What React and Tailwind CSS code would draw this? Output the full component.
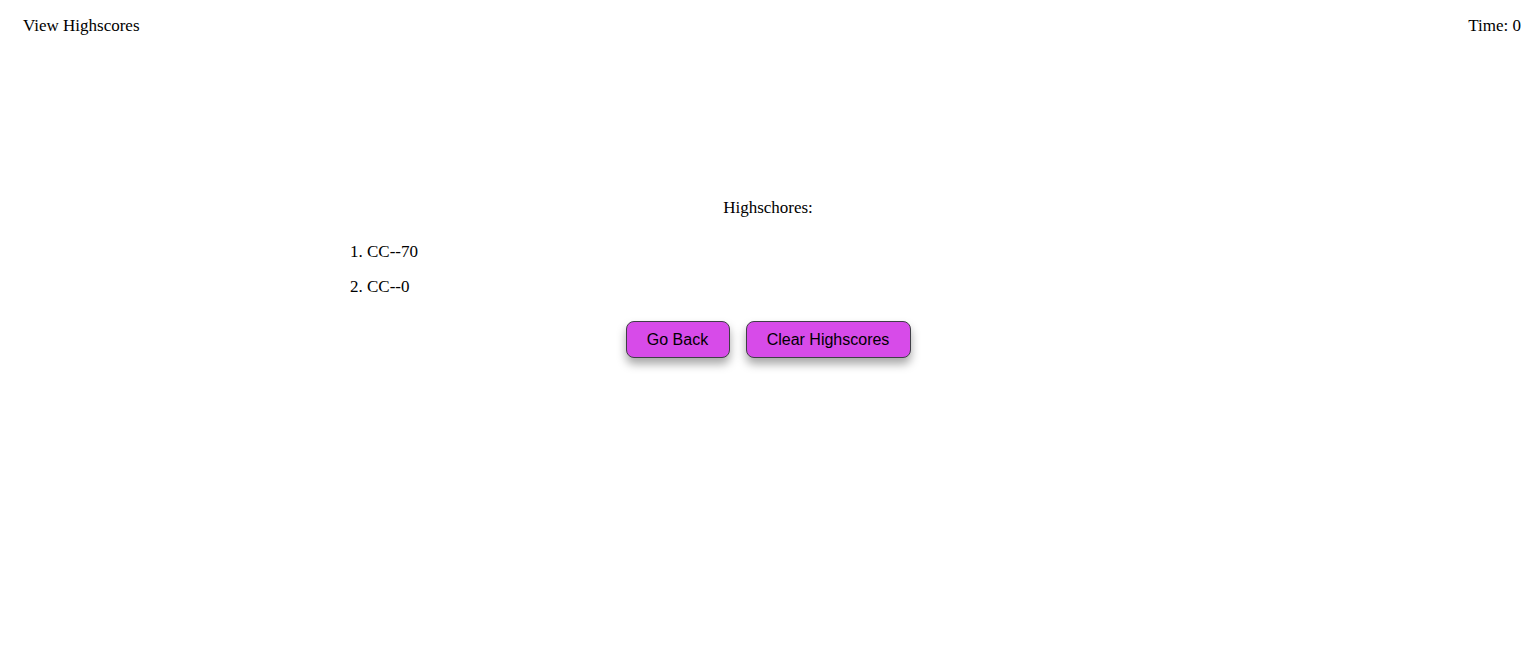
export default function App() {
  const scores = ["CC--70", "CC--0"]

  return (
    <div className="min-h-screen bg-white text-black" style={{ fontFamily: '"Liberation Serif", serif' }}>
      <header className="flex items-center justify-between px-[23px] pt-[16px] text-[17px] leading-[20px]">
        <a className="cursor-pointer">View Highscores</a>
        <span className="mr-[-8px]">Time: 0</span>
      </header>

      <main className="mx-auto mt-[162px] w-[882px]">
        <h2 className="text-center text-[17px] leading-[20px]">Highschores:</h2>
        <ol className="mt-[16px] list-decimal pl-[40px] text-[17px]">
          {scores.map((s) => (
            <li key={s} className="h-[35px] leading-[35px]">{s}</li>
          ))}
        </ol>
        <div
          className="mt-[17px] flex justify-center gap-[16px]"
          style={{ fontFamily: '"Liberation Sans", Arial, sans-serif' }}
        >
          <button className="h-[37px] w-[104px] rounded-[8px] border border-[#3f3f46] bg-[#d74be9] text-[16px] text-black shadow-[0_6px_10px_rgba(0,0,0,0.35)]">
            Go Back
          </button>
          <button className="h-[37px] w-[165px] rounded-[8px] border border-[#3f3f46] bg-[#d74be9] text-[16px] text-black shadow-[0_6px_10px_rgba(0,0,0,0.35)]">
            Clear Highscores
          </button>
        </div>
      </main>
    </div>
  )
}
